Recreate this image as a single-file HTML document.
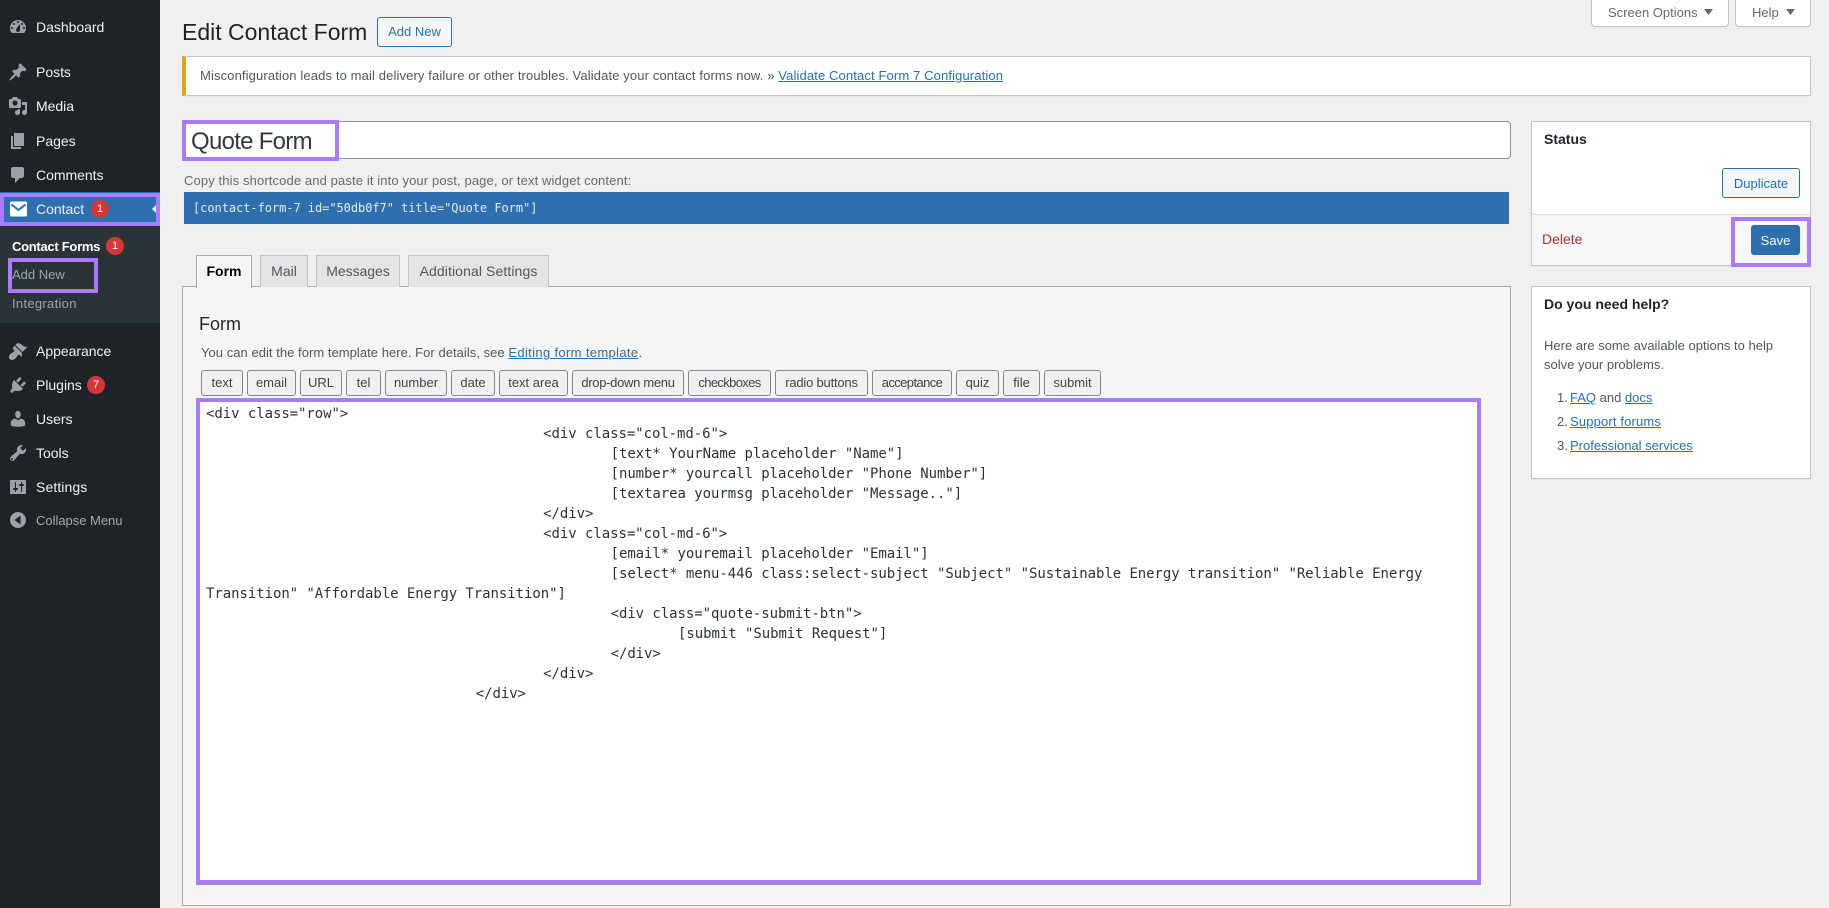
<!DOCTYPE html>
<html lang="en">
<head>
<meta charset="utf-8">
<title>Edit Contact Form</title>
<style>
html,body{margin:0;padding:0;width:1829px;height:908px;overflow:hidden;background:#f0f0f1;font-family:"Liberation Sans",sans-serif;color:#3c434a;font-size:13px}
*{box-sizing:border-box}
.a,.m,.s,.b,.icon,.p,.btn,.tab,.tag{position:absolute}
a{color:#2271b1;text-decoration:underline}
#side{position:absolute;left:0;top:0;width:160px;height:908px;background:#1d2327}
#sub{position:absolute;left:0;top:226px;width:160px;height:97px;background:#2c3338}
.m{left:36px;font-size:14px;line-height:20px;color:#f0f0f1;white-space:nowrap;letter-spacing:-.02px}
.s{left:12px;font-size:13px;line-height:18px;color:#b4b9be;white-space:nowrap}
.icon{left:8px;width:20px;height:20px;fill:#9ca1a7}
.b{width:18px;height:18px;border-radius:50%;background:#d63638;color:#fff;font-size:11px;line-height:18px;text-align:center}
.p{border:4px solid #ab7bff;z-index:5;pointer-events:none}
.a{white-space:nowrap}
.btn{display:block;text-align:center;border:1px solid #2271b1;border-radius:3px;background:#f6f7f7;color:#2271b1;font-size:13px;line-height:28px;height:30px}
.tab{top:255px;height:32px;border:1px solid #c3c4c7;border-bottom:0;background:#e4e4e4;font-size:14px;line-height:31px;text-align:center;color:#50575e}
.tag{top:370px;height:26px;border:1px solid #7e8993;border-radius:3px;background:#f0f0f1;color:#3c434a;font-size:13px;line-height:24px;text-align:center;white-space:nowrap}
pre{position:absolute;margin:0;font-family:"DejaVu Sans Mono","Liberation Mono",monospace}
pre i{font-style:normal;letter-spacing:-.06px}
.box{position:absolute;background:#fff;border:1px solid #c3c4c7;box-shadow:0 1px 1px rgba(0,0,0,.04)}
</style>
</head>
<body>

<nav id="side">
  <div id="sub"></div>

  <svg class="icon" style="top:17px" viewBox="0 0 20 20"><path fill-rule="evenodd" d="M3.76 16h12.48c1.1-1.37 1.76-3.11 1.76-5 0-4.42-3.58-8-8-8s-8 3.58-8 8c0 1.89.66 3.63 1.76 5zM10 4c.55 0 1 .45 1 1s-.45 1-1 1-1-.45-1-1 .45-1 1-1zM6 6c.55 0 1 .45 1 1s-.45 1-1 1-1-.45-1-1 .45-1 1-1zm8 0c.55 0 1 .45 1 1s-.45 1-1 1-1-.45-1-1 .45-1 1-1zm-5.37 5.55L12 7v6c0 1.1-.9 2-2 2s-2-.9-2-2c0-.57.24-1.08.63-1.45zM4 10c.55 0 1 .45 1 1s-.45 1-1 1-1-.45-1-1 .45-1 1-1zm12 0c.55 0 1 .45 1 1s-.45 1-1 1-1-.45-1-1 .45-1 1-1z"/></svg>
  <div class="m" style="top:17px">Dashboard</div>

  <svg class="icon" style="top:62px" viewBox="0 0 20 20"><path d="M10.44 3.02l1.82-1.82 6.36 6.35-1.83 1.82c-1.05-.68-2.48-.57-3.41.36l-.75.75c-.92.93-1.04 2.35-.35 3.41l-1.83 1.82-2.41-2.41-2.8 2.79c-.42.42-3.38 2.71-3.8 2.29s1.86-3.39 2.28-3.81l2.79-2.79L4.1 9.36l1.83-1.82c1.05.69 2.48.57 3.4-.36l.75-.75c.93-.92 1.05-2.35.36-3.41z"/></svg>
  <div class="m" style="top:62px">Posts</div>

  <svg class="icon" style="top:96px" viewBox="0 0 20 20"><path fill-rule="evenodd" d="M13 11V4c0-.55-.45-1-1-1h-1.67L9 1H5L3.67 3H2c-.55 0-1 .45-1 1v7c0 .55.45 1 1 1h10c.55 0 1-.45 1-1zM7 4.5c1.38 0 2.5 1.12 2.5 2.5S8.38 9.500 7 9.500 4.500 8.380 4.500 7 5.620 4.500 7 4.500zM14 6h5v10.500c0 1.380-1.120 2.500-2.500 2.500S14 17.880 14 16.500s1.120-2.500 2.500-2.500c.170 0 .340.020.500.050V9h-3V6zm-4 8.050V13h2v3.500c0 1.380-1.120 2.500-2.500 2.500S7 17.880 7 16.500 8.120 14 9.500 14c.170 0 .340.020.500.050z"/></svg>
  <div class="m" style="top:96px">Media</div>

  <svg class="icon" style="top:131px" viewBox="0 0 20 20"><path d="M6 15V2h10v13H6zm-1 1h8v2H3V5h2v11z"/></svg>
  <div class="m" style="top:131px">Pages</div>

  <svg class="icon" style="top:165px" viewBox="0 0 20 20"><path d="M5 2h9c1.100 0 2 .9 2 2v7c0 1.100-.9 2-2 2h-2l-5 5v-5H5c-1.100 0-2-.9-2-2V4c0-1.100.9-2 2-2z"/></svg>
  <div class="m" style="top:165px">Comments</div>

  <div style="position:absolute;left:0;top:192px;width:160px;height:34px;background:#2e70af"></div>
  <svg class="icon" style="top:199px;fill:none" viewBox="0 0 20 20"><rect x="2" y="2.500" width="17" height="15" rx="1.500" fill="#fff"/><path d="M3.500 5.500L10.500 11l7-5.500" stroke="#2e70af" stroke-width="2" fill="none"/></svg>
  <div class="m" style="top:199px">Contact</div>
  <div class="b" style="left:91px;top:200px">1</div>
  <svg style="position:absolute;left:152px;top:203px;width:6px;height:12px" viewBox="0 0 6 12"><path d="M6 0L0 6l6 6z" fill="#f0f0f1"/></svg>

  <div class="s" style="top:238px;color:#fff;font-weight:700;letter-spacing:-.28px">Contact Forms</div>
  <div class="b" style="left:106px;top:237px">1</div>
  <div class="s" style="top:266px;color:#a0a5aa">Add New</div>
  <div class="s" style="top:295px;color:#a0a5aa;letter-spacing:.3px">Integration</div>

  <svg class="icon" style="top:341px" viewBox="0 0 20 20"><path d="M14.480 11.060L7.410 3.990l1.500-1.500c.5-.56 2.300-.47 3.510.32 1.210.8 1.430 1.280 2.910 2.100 1.180.64 2.450 1.260 4.450.85zm-.71.71L6.700 4.700 4.930 6.470c-.39.39-.39 1.020 0 1.410l1.060 1.060c.39.39.39 1.030 0 1.420-.6.6-1.430 1.110-2.210 1.690-.35.26-.7.53-1.010.84C1.430 13.710 0 16.360 1.820 18.180s4.460.39 5.770-.92c.31-.31.58-.66.84-1.010.58-.78 1.090-1.610 1.690-2.210.39-.39 1.030-.39 1.420 0l1.060 1.060c.39.39 1.020.39 1.410 0z"/></svg>
  <div class="m" style="top:341px">Appearance</div>

  <svg class="icon" style="top:375px" viewBox="0 0 20 20"><path d="M13.110 4.360L9.870 7.600 8 5.730l3.240-3.240c.35-.34 1.050-.2 1.560.32.52.51.66 1.210.31 1.550zm-8 1.770l.91-1.120 9.010 9.010-1.190.84c-.71.71-2.630 1.160-3.820 1.160H6.140L4.900 17.260c-.59.59-1.540.59-2.120 0-.59-.58-.59-1.530 0-2.120l1.240-1.240v-3.880c0-1.130.46-3.050 1.090-3.890zm7.260 3.970l3.240-3.240c.34-.35 1.040-.21 1.550.31.52.51.66 1.210.31 1.550l-3.240 3.250z"/></svg>
  <div class="m" style="top:375px">Plugins</div>
  <div class="b" style="left:87px;top:376px">7</div>

  <svg class="icon" style="top:409px" viewBox="0 0 20 20"><path d="M10 9.250c-2.270 0-2.750-3.430-2.750-3.430C6.980 4.040 7.800 2 9.970 2c2.180 0 3 2.040 2.730 3.820 0 0-.43 3.430-2.700 3.430zm0 2.160l2.720-1.810c2.390 0 4.520 2.330 4.520 4.520v2.490s-3.650 1.130-7.240 1.130c-3.650 0-7.240-1.130-7.240-1.130v-2.490c0-2.250 1.940-4.480 4.570-4.480z"/></svg>
  <div class="m" style="top:409px">Users</div>

  <svg class="icon" style="top:443px" viewBox="0 0 20 20"><path fill-rule="evenodd" d="M16.680 9.770c-1.340 1.340-3.300 1.670-4.950.99l-5.410 6.520c-.99.99-2.590.99-3.570 0-.99-.98-.99-2.580 0-3.570l6.520-5.420c-.68-1.650-.35-3.610.99-4.950 1.280-1.280 3.120-1.620 4.720-1.060l-2.890 2.890 2.820 2.820 2.860-2.870c.53 1.580.18 3.390-1.090 4.650zM4.660 15.400c-.39-.39-1.030-.39-1.420 0s-.39 1.030 0 1.420 1.030.39 1.420 0 .39-1.030 0-1.420z"/></svg>
  <div class="m" style="top:443px">Tools</div>

  <svg class="icon" style="top:477px" viewBox="0 0 20 20"><path fill-rule="evenodd" d="M18 16V4c0-.55-.45-1-1-1H3c-.55 0-1 .45-1 1v12c0 .55.45 1 1 1h14c.55 0 1-.45 1-1zM8 11h1c.55 0 1 .45 1 1s-.45 1-1 1H8v1.500c0 .28-.22.5-.5.5s-.5-.22-.5-.5V13H6c-.55 0-1-.45-1-1s.45-1 1-1h1V5.500c0-.28.22-.5.5-.5s.5.22.5.5V11zm5-2h-1c-.55 0-1-.45-1-1s.45-1 1-1h1V5.500c0-.28.22-.5.5-.5s.5.22.5.5V7h1c.55 0 1 .45 1 1s-.45 1-1 1h-1v5.500c0 .28-.22.5-.5.5s-.5-.22-.5-.5V9z"/></svg>
  <div class="m" style="top:477px;letter-spacing:.1px">Settings</div>

  <svg class="icon" style="top:510px" viewBox="0 0 20 20"><path fill-rule="evenodd" d="M18 10a8 8 0 1 1-16 0 8 8 0 0 1 16 0zM12.500 5.500L6.500 10l6 4.500z"/></svg>
  <div class="m" style="top:511px;font-size:13px;color:#a7aaad">Collapse Menu</div>
</nav>
<div class="p" style="left:0;top:193px;width:160px;height:33px"></div>
<div class="p" style="left:8px;top:258px;width:90px;height:35px"></div>

<!-- screen tabs -->
<div class="box" style="left:1591px;top:-1px;width:138px;height:28px;border-radius:0 0 4px 4px;font-size:13px;line-height:26px;color:#646970;padding-left:16px;white-space:nowrap">Screen Options<svg style="position:absolute;left:112px;top:9px" width="9" height="6" viewBox="0 0 9 6"><path d="M0 0h9L4.500 6z" fill="#646970"/></svg></div>
<div class="box" style="left:1735px;top:-1px;width:76px;height:28px;border-radius:0 0 4px 4px;font-size:13px;line-height:26px;color:#646970;padding-left:16px">Help<svg style="position:absolute;left:50px;top:9px" width="9" height="6" viewBox="0 0 9 6"><path d="M0 0h9L4.500 6z" fill="#646970"/></svg></div>

<h1 class="a" style="left:182px;top:16px;margin:0;font-size:23px;font-weight:400;line-height:32px;color:#1d2327">Edit Contact Form</h1>
<a class="btn" style="left:377px;top:17px;width:75px;text-decoration:none">Add New</a>

<div class="box" style="left:182px;top:56px;width:1629px;height:40px;border-left:4px solid #dba617"></div>
<div class="a" style="left:200px;top:67px;font-size:13px;line-height:18px;color:#50575e;letter-spacing:.125px">Misconfiguration leads to mail delivery failure or other troubles. Validate your contact forms now. » <a>Validate Contact Form 7 Configuration</a></div>

<!-- title -->
<div style="position:absolute;left:182px;top:121px;width:1329px;height:38px;background:#fff;border:1px solid #8c8f94;border-radius:4px"></div>
<div class="a" style="left:191px;top:126px;font-size:24px;line-height:32px;color:#32393f;letter-spacing:-.72px">Quote Form</div>
<div class="p" style="left:182px;top:120px;width:157px;height:41px"></div>

<div class="a" style="left:184px;top:171px;font-size:13px;line-height:19px;color:#646970;letter-spacing:.12px">Copy this shortcode and paste it into your post, page, or text widget content:</div>
<div style="position:absolute;left:184px;top:192px;width:1325px;height:32px;background:#2e70af"></div>
<pre style="left:193px;top:199px;font-size:12px;line-height:18px;color:#e6eef6;letter-spacing:-.05px">[contact-form-7 id="50db0f7" title="Quote Form"]</pre>

<!-- panel -->
<div style="position:absolute;left:182px;top:286px;width:1329px;height:620px;background:#f5f5f5;border:1px solid #aaa"></div>
<div class="tab" style="left:196px;width:56px;height:33px;background:#f5f5f5;border-color:#aaa;color:#000;font-weight:700">Form</div>
<div class="tab" style="left:260px;width:48px">Mail</div>
<div class="tab" style="left:316px;width:84px;letter-spacing:-.05px">Messages</div>
<div class="tab" style="left:408px;width:141px;white-space:nowrap;letter-spacing:.1px">Additional Settings</div>

<h2 class="a" style="left:199px;top:312px;margin:0;font-size:18px;font-weight:400;line-height:24px;color:#23282d">Form</h2>
<div class="a" style="left:201px;top:343px;font-size:13px;line-height:19px;color:#50575e;letter-spacing:.04px">You can edit the form template here. For details, see <a style="letter-spacing:.345px">Editing form template</a>.</div>

<div class="tag" style="left:201px;width:42px">text</div>
<div class="tag" style="left:247px;width:49px">email</div>
<div class="tag" style="left:300px;width:42px">URL</div>
<div class="tag" style="left:346px;width:35px">tel</div>
<div class="tag" style="left:385px;width:62px">number</div>
<div class="tag" style="left:451px;width:44px">date</div>
<div class="tag" style="left:499px;width:69px">text area</div>
<div class="tag" style="left:572px;width:112px;letter-spacing:-.3px">drop-down menu</div>
<div class="tag" style="left:688px;width:83px;letter-spacing:-.65px">checkboxes</div>
<div class="tag" style="left:775px;width:93px;letter-spacing:-.2px">radio buttons</div>
<div class="tag" style="left:872px;width:80px;letter-spacing:-.6px">acceptance</div>
<div class="tag" style="left:956px;width:43px">quiz</div>
<div class="tag" style="left:1003px;width:37px">file</div>
<div class="tag" style="left:1044px;width:57px">submit</div>

<!-- textarea -->
<div style="position:absolute;left:196px;top:398px;width:1285px;height:486px;background:#fff;box-shadow:0 1px 0 #999"></div>
<div class="p" style="left:196px;top:398px;width:1285px;height:486px"></div>
<pre style="left:206px;top:404px;font-size:14px;line-height:20px;color:#2c3338"><i>&lt;div class="row"&gt;</i>
                                        <i>&lt;div class="col-md-6"&gt;</i>
                                                <i>[text* YourName placeholder "Name"]</i>
                                                <i>[number* yourcall placeholder "Phone Number"]</i>
                                                <i>[textarea yourmsg placeholder "Message.."]</i>
                                        <i>&lt;/div&gt;</i>
                                        <i>&lt;div class="col-md-6"&gt;</i>
                                                <i>[email* youremail placeholder "Email"]</i>
                                                <i>[select* menu-446 class:select-subject "Subject" "Sustainable Energy transition" "Reliable Energy</i>
<i>Transition" "Affordable Energy Transition"]</i>
                                                <i>&lt;div class="quote-submit-btn"&gt;</i>
                                                        <i>[submit "Submit Request"]</i>
                                                <i>&lt;/div&gt;</i>
                                        <i>&lt;/div&gt;</i>
                                <i>&lt;/div&gt;</i></pre>

<!-- status -->
<div class="box" style="left:1531px;top:121px;width:280px;height:145px"></div>
<div class="a" style="left:1544px;top:129px;font-size:14px;line-height:20px;font-weight:700;color:#1d2327">Status</div>
<a class="btn" style="left:1722px;top:168px;width:78px;text-decoration:none;line-height:30px">Duplicate</a>
<div style="position:absolute;left:1532px;top:214px;width:278px;height:51px;background:#f6f7f7;border-top:1px solid #dcdcde"></div>
<div class="a" style="left:1542px;top:229px;font-size:14px;line-height:20px;color:#b32d2e">Delete</div>
<div class="btn" style="left:1751px;top:225px;width:49px;background:#2e70af;color:#fff;border-color:#2e70af;line-height:29px">Save</div>
<div class="p" style="left:1731px;top:217px;width:80px;height:50px"></div>

<!-- help -->
<div class="box" style="left:1531px;top:286px;width:280px;height:193px"></div>
<div class="a" style="left:1544px;top:294px;font-size:14px;line-height:20px;font-weight:700;color:#1d2327">Do you need help?</div>
<div class="a" style="left:1544px;top:336px;font-size:13px;line-height:19px;color:#50575e">Here are some available options to help<br>solve your problems.</div>
<div class="a" style="left:1557px;top:389px;font-size:13px;line-height:18px;color:#50575e">1.</div>
<div class="a" style="left:1570px;top:389px;font-size:13px;line-height:18px;color:#50575e"><a>FAQ</a> and <a>docs</a></div>
<div class="a" style="left:1557px;top:413px;font-size:13px;line-height:18px;color:#50575e">2.</div>
<div class="a" style="left:1570px;top:413px;font-size:13px;line-height:18px;letter-spacing:.15px"><a>Support forums</a></div>
<div class="a" style="left:1557px;top:437px;font-size:13px;line-height:18px;color:#50575e">3.</div>
<div class="a" style="left:1570px;top:437px;font-size:13px;line-height:18px"><a>Professional services</a></div>

</body>
</html>
